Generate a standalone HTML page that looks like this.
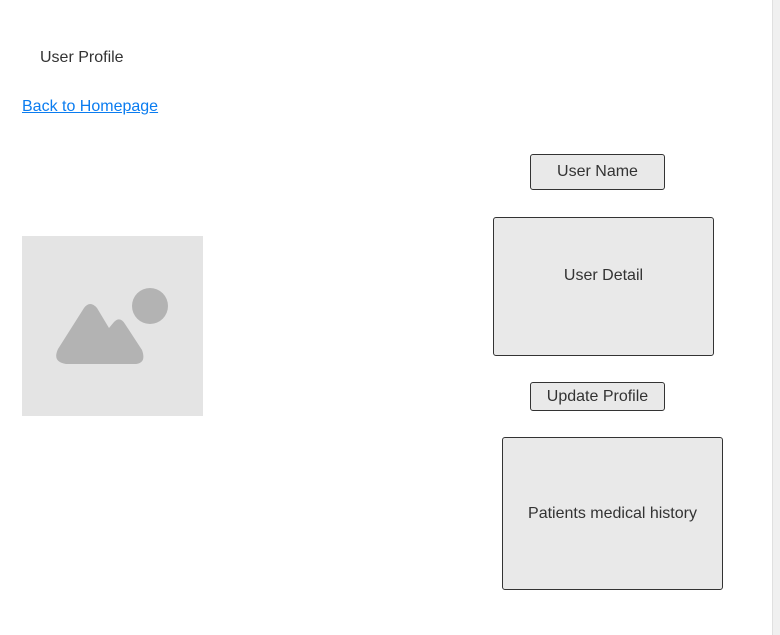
<!DOCTYPE html>
<html><head><style>
body{margin:0;width:780px;height:635px;background:#fff;position:relative;overflow:hidden;font-family:"Liberation Sans",Arial,sans-serif;color:#333;}
.a{position:absolute}
.box{position:absolute;box-sizing:border-box;border:1px solid #333;border-radius:3px;background:#e9e9e9;display:flex;align-items:center;justify-content:center;font-size:16px;color:#333}
</style></head><body>
<div class="a" style="left:40px;top:49px;font-size:16px">User Profile</div>
<div class="a" style="left:22px;top:98px;font-size:16px;color:#0a7cf0;text-decoration:underline">Back to Homepage</div>
<div class="a" style="left:22px;top:236px;width:181px;height:180px;background:#e4e4e4">
<svg width="181" height="180" viewBox="0 0 181 180">
<circle cx="128" cy="70" r="18" fill="#b3b3b3"/>
<path d="M36 113 L62 72 Q68 64 75 72 L87 92 L92 86 Q98 80 103 88 L120 114 Q125 128 112 128 L44 128 Q30 126 36 113 Z" fill="#b3b3b3"/>
</svg></div>
<div class="box" style="left:530px;top:154px;width:135px;height:36px">User Name</div>
<div class="box" style="left:493px;top:217px;width:221px;height:139px;padding-bottom:22px">User Detail</div>
<div class="box" style="left:530px;top:382px;width:135px;height:29px">Update Profile</div>
<div class="box" style="left:502px;top:437px;width:221px;height:153px">Patients medical history</div>
<div class="a" style="left:772px;top:0;width:8px;height:635px;background:#f0f0f0;border-left:1px solid #e0e0e0"></div>
</body></html>
